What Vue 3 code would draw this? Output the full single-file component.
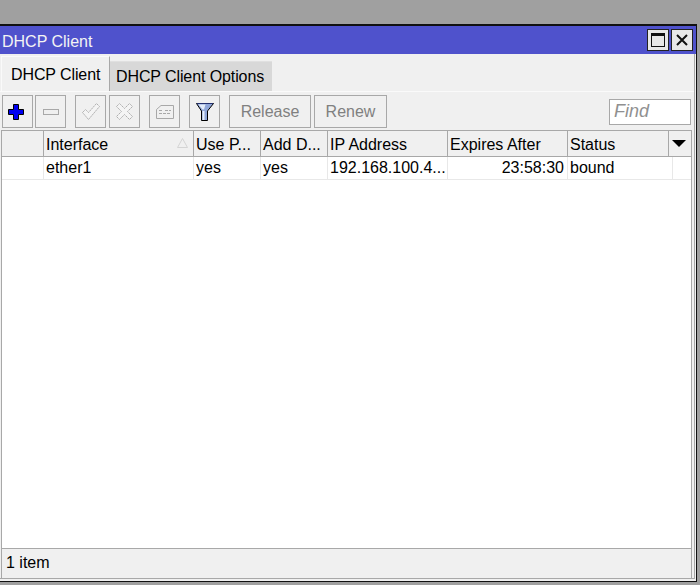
<script setup>
const headers = [
  { label: '', w: 42 },
  { label: 'Interface', w: 150, sort: true },
  { label: 'Use P...', w: 67 },
  { label: 'Add D...', w: 67 },
  { label: 'IP Address', w: 120 },
  { label: 'Expires After', w: 120 },
  { label: 'Status', w: 101 },
  { label: '', w: 22, menu: true }
]
const cells = [
  { t: '', w: 42 },
  { t: 'ether1', w: 150 },
  { t: 'yes', w: 67 },
  { t: 'yes', w: 67 },
  { t: '192.168.100.4...', w: 120 },
  { t: '23:58:30', w: 120, right: true },
  { t: 'bound', w: 105 },
  { t: '', w: 18 }
]
</script>

<template>
  <div class="screen">
    <div class="window">
      <div class="titlebar">
        <span class="title">DHCP Client</span>
        <div class="winbtns">
          <button class="winbtn">
            <svg width="16" height="16" viewBox="0 0 16 16"><rect x="1.500" y="1.500" width="13" height="13" fill="none" stroke="#111"/><rect x="1" y="1" width="14" height="3" fill="#111"/></svg>
          </button>
          <button class="winbtn">
            <svg width="12" height="12" viewBox="0 0 12 12"><path d="M1 1 L11 11 M11 1 L1 11" stroke="#111" stroke-width="2"/></svg>
          </button>
        </div>
      </div>
      <div class="body">
        <div class="tabs">
          <div class="tab active">DHCP Client</div>
          <div class="tab">DHCP Client Options</div>
        </div>
        <div class="panel">
          <div class="toolbar">
            <button class="tool tool-add">
              <svg width="16" height="16" viewBox="0 0 16 16"><path d="M5.500 .5h5v5h5v5h-5v5h-5v-5h-5v-5h5z" fill="#0000f0" stroke="#000"/></svg>
            </button>
            <button class="tool tool-gap">
              <svg width="16" height="6" viewBox="0 0 16 6"><rect x=".5" y=".5" width="15" height="5" fill="#efefef" stroke="#a8a8a8"/></svg>
            </button>
            <button class="tool">
              <svg width="18" height="17" viewBox="0 0 18 17"><path d="M.5 9.500l3-3 3 3 8-9 3 3-11 13z" fill="#f4f4f4" stroke="#b0b0b0" stroke-dasharray="2 .6"/></svg>
            </button>
            <button class="tool tool-gap">
              <svg width="17" height="17" viewBox="0 0 17 17"><path d="M.5 3.500l3-3 5 5 5-5 3 3-5 5 5 5-3 3-5-5-5 5-3-3 5-5z" fill="#f4f4f4" stroke="#b0b0b0" stroke-dasharray="2 .6"/></svg>
            </button>
            <button class="tool tool-gap">
              <svg width="18" height="14" viewBox="0 0 18 14"><path d="M.5 4.500L5 .5h12.500v13H.5z" fill="#f0f0f0" stroke="#a8a8a8"/><path d="M3 5.500h4M9 5.500h6M3 8.500h12" stroke="#a8a8a8" stroke-dasharray="3 1"/></svg>
            </button>
            <button class="tool tool-gap">
              <svg width="18" height="20" viewBox="0 0 18 20"><path d="M.5 1.500h17L11.500 9v9.500h-6V9z" fill="#8fa6d8" stroke="#000"/><path d="M2.500 2.500h7l-1.500 5h-1.500z" fill="#e4ecf8"/><path d="M6.500 9h2v9h-2z" fill="#e8f0fa"/><path d="M1 1h16v1H1z" fill="#24306e"/></svg>
            </button>
            <button class="tool text-btn release">Release</button>
            <button class="tool text-btn renew">Renew</button>
            <div class="find">Find</div>
          </div>
          <div class="table">
            <div class="thead">
              <div v-for="(h, i) in headers" :key="i" class="th" :style="{ width: h.w + 'px' }">
                {{ h.label }}
                <svg v-if="h.sort" class="sort" width="11" height="10" viewBox="0 0 11 10"><path d="M5.500 .5L10.500 9.500H.5z" fill="none" stroke="#d4d4d4"/></svg>
                <svg v-if="h.menu" class="menu" width="14" height="7" viewBox="0 0 14 7"><path d="M0 0h14L7 7z" fill="#000"/></svg>
              </div>
            </div>
            <div class="row">
              <div v-for="(c, i) in cells" :key="i" class="td" :class="{ right: c.right }" :style="{ width: c.w + 'px' }">{{ c.t }}</div>
            </div>
            <div class="fill"></div>
            <div class="status">1 item</div>
          </div>
        </div>
      </div>
    </div>
  </div>
</template>

<style>
html, body { margin: 0; background: #a0a0a0; }
</style>

<style scoped>
.screen {
  width: 700px;
  height: 585px;
  box-sizing: border-box;
  padding: 24px 3px 0 0;
  background: #a0a0a0;
  overflow: hidden;
  font: 16px "Liberation Sans", Arial, sans-serif;
  color: #000;
}
.window {
  height: 558px;
  box-sizing: border-box;
  border-top: 2px solid #111;
  border-right: 1px solid #111;
  border-bottom: 1px solid #111;
  background: #f0f0f0;
  display: flex;
  flex-direction: column;
}
.titlebar {
  height: 28px;
  flex: none;
  background: #4f52cc;
  color: #f4f4f4;
  display: flex;
  align-items: center;
  justify-content: space-between;
  padding: 0 3px 0 2px;
}
.title { position: relative; top: 2px; }
.winbtns { display: flex; gap: 2px; }
.winbtn {
  width: 22px;
  height: 22px;
  padding: 0;
  border: 1px solid #222;
  background: #e8e8e8;
  display: flex;
  align-items: center;
  justify-content: center;
}
.body {
  flex: 1;
  display: flex;
  flex-direction: column;
  min-height: 0;
  border-right: 1px solid #a8a8a8;
  border-bottom: 1px solid #a8a8a8;
  margin-right: 1px;
  margin-bottom: 2px;
}
.tabs {
  height: 38px;
  flex: none;
  display: flex;
  align-items: flex-end;
  padding-left: 1px;
  box-sizing: border-box;
  border-bottom: 1px solid #fafafa;
}
.tab {
  height: 30px;
  box-sizing: border-box;
  width: 162px;
  background: #d8d8d8;
  padding: 6px 0 0 6px;
  white-space: nowrap;
  letter-spacing: -0.1px;
  border-top: 1px solid #e0e0e0;
}
.tab.active {
  width: 109px;
  height: 35px;
  background: #f0f0f0;
  padding: 9px 0 0 9px;
  border-top: 1px solid #fafafa;
  border-left: 1px solid #fafafa;
  border-right: 1px solid #a8a8a8;
}
.panel {
  flex: 1;
  min-height: 0;
  display: flex;
  flex-direction: column;
  padding: 3px 2px 0 1px;
}
.toolbar {
  height: 33px;
  flex: none;
  display: flex;
  align-items: center;
  padding-left: 1px;
  margin-bottom: 2px;
}
.tool {
  width: 31px;
  height: 33px;
  box-sizing: border-box;
  padding: 0;
  margin-right: 3px;
  border: 1px solid #a8a8a8;
  background: #f0f0f0;
  display: flex;
  align-items: center;
  justify-content: center;
}
.tool-gap { margin-right: 9px; }
.tool-add { margin-right: 2px; padding-right: 3px; }
.text-btn {
  font: 16px "Liberation Sans", Arial, sans-serif;
  color: #808080;
}
.release { width: 82px; }
.renew { width: 73px; }
.find {
  margin-left: auto;
  margin-right: 1px;
  width: 82px;
  height: 26px;
  box-sizing: border-box;
  border: 1px solid #a8a8a8;
  background: #fff;
  color: #909090;
  font-style: italic;
  font-size: 18px;
  line-height: 22px;
  padding-left: 4px;
}
.table {
  flex: 1;
  min-height: 0;
  display: flex;
  flex-direction: column;
  border: 1px solid #a8a8a8;
  border-bottom: none;
  background: #fff;
}
.thead {
  height: 26px;
  flex: none;
  box-sizing: border-box;
  display: flex;
  background: #f0f0f0;
  border-bottom: 1px solid #a8a8a8;
}
.th {
  position: relative;
  flex: none;
  box-sizing: border-box;
  border-right: 1px solid #a8a8a8;
  padding: 1px 0 0 2px;
  line-height: 25px;
  white-space: nowrap;
  overflow: hidden;
}
.th:last-child { border-right: none; }
.sort { position: absolute; right: 5px; top: 7px; }
.menu { position: absolute; left: 3px; top: 9px; }
.row {
  height: 23px;
  flex: none;
  box-sizing: border-box;
  display: flex;
  border-bottom: 1px solid #e8e8e8;
}
.td {
  flex: none;
  box-sizing: border-box;
  border-right: 1px solid #e8e8e8;
  padding: 0 3px 0 2px;
  line-height: 22px;
  white-space: nowrap;
  overflow: hidden;
}
.td:last-child { border-right: none; }
.td.right { text-align: right; }
.fill { flex: 1; }
.status {
  height: 30px;
  flex: none;
  box-sizing: border-box;
  background: #f0f0f0;
  border-top: 1px solid #a8a8a8;
  padding-left: 4px;
  line-height: 28px;
}
</style>
